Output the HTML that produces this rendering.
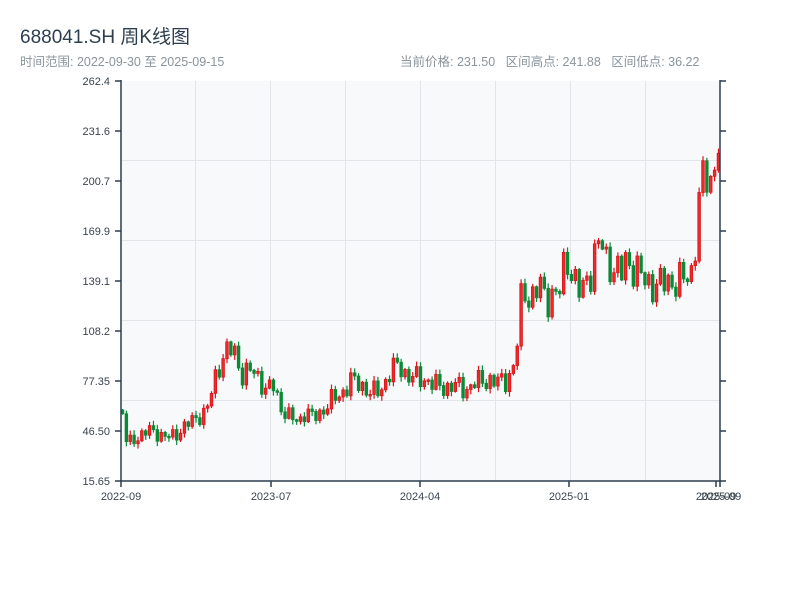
<!DOCTYPE html>
<html><head><meta charset="utf-8"><style>
body{margin:0;width:800px;height:600px;background:#fff;font-family:"Liberation Sans","Noto Sans CJK SC",sans-serif;overflow:hidden}
.t{position:absolute;left:20px;top:22px;font-size:19px;color:#2c3e50}
.s{position:absolute;top:51px;font-size:12.5px;color:#8a949c}
</style></head><body>
<div class="t">688041.SH 周K线图</div>
<div class="s" style="left:20px">时间范围: 2022-09-30 至 2025-09-15</div>
<div class="s" style="left:400px">当前价格: 231.50&nbsp;&nbsp;&nbsp;区间高点: 241.88&nbsp;&nbsp;&nbsp;区间低点: 36.22</div>
<svg id="c" width="800" height="600" style="position:absolute;left:0;top:0" font-family="Liberation Sans, sans-serif" font-size="11" fill="#3a4450">
<rect x="121" y="81" width="599" height="400" fill="#f7f9fb"/>
<g stroke="#e1e4e8" stroke-width="1">
<line x1="195.5" y1="81" x2="195.5" y2="481"/><line x1="270.5" y1="81" x2="270.5" y2="481"/><line x1="345.5" y1="81" x2="345.5" y2="481"/><line x1="420.5" y1="81" x2="420.5" y2="481"/><line x1="495.5" y1="81" x2="495.5" y2="481"/><line x1="570.5" y1="81" x2="570.5" y2="481"/><line x1="645.5" y1="81" x2="645.5" y2="481"/>
<line x1="121" y1="160.5" x2="720" y2="160.5"/><line x1="121" y1="240.5" x2="720" y2="240.5"/><line x1="121" y1="320.5" x2="720" y2="320.5"/><line x1="121" y1="400.5" x2="720" y2="400.5"/>
</g>
<g id="k"></g>
<g stroke="#2c3e50" stroke-width="1.5" fill="none">
<line x1="121" y1="80" x2="121" y2="482"/><line x1="720" y1="80" x2="720" y2="482"/><line x1="120" y1="481" x2="721" y2="481"/>
<path d="M115 81h6M115 131h6M115 181h6M115 231h6M115 281h6M115 331h6M115 381h6M115 431h6M115 481h6M720 81h6M720 131h6M720 181h6M720 231h6M720 281h6M720 331h6M720 381h6M720 431h6M720 481h6M121 481v6M271 481v6M420 481v6M569 481v6M716 481v6M720 481v6"/>
</g>
<g text-anchor="end">
<text x="110" y="85">262.4</text><text x="110" y="135">231.6</text><text x="110" y="185">200.7</text><text x="110" y="235">169.9</text><text x="110" y="285">139.1</text><text x="110" y="335">108.2</text><text x="110" y="385">77.35</text><text x="110" y="435">46.50</text><text x="110" y="485">15.65</text>
</g>
<g text-anchor="middle">
<text x="121" y="500">2022-09</text><text x="271" y="500">2023-07</text><text x="420" y="500">2024-04</text><text x="569" y="500">2025-01</text><text x="716" y="500">2025-09</text><text x="721" y="500">2025-09</text>
</g>
</svg>
<script>
(function(){
var kp=[[121,410],[125,440],[130,442],[140,435],[148,430],[155,433],[165,437],[175,435],[185,425],[195,418],[205,412],[210,395],[215,375],[220,360],[228,348],[235,355],[240,375],[250,370],[258,378],[265,390],[272,385],[280,408],[290,418],[298,422],[305,410],[312,418],[320,413],[330,400],[340,395],[350,380],[360,385],[370,393],[380,390],[390,370],[398,365],[405,375],[415,378],[425,380],[435,385],[445,388],[455,385],[465,390],[475,382],[485,380],[495,382],[505,380],[512,370],[516,345],[520,300],[525,290],[530,300],[540,285],[545,300],[550,295],[558,295],[565,255],[570,270],[575,285],[580,295],[585,280],[590,270],[595,250],[600,240],[605,260],[610,265],[615,270],[620,275],[625,260],[630,265],[640,275],[645,283],[655,285],[665,282],[675,282],[685,278],[690,275],[693,255],[697,210],[700,185],[705,175],[710,185],[715,150],[719,130]];
function f(x){for(var i=1;i<kp.length;i++){if(x<=kp[i][0]){var a=kp[i-1],b=kp[i];return a[1]+(b[1]-a[1])*(x-a[0])/(b[0]-a[0]);}}return 130;}
var NS='http://www.w3.org/2000/svg',g=document.getElementById('k'),prev=410;
function el(t,a){var e=document.createElementNS(NS,t);for(var k in a)e.setAttribute(k,String(a[k]));g.appendChild(e);}
for(var i=0;i<155;i++){var x=121.5+i*3.87;var base=f(x);var amp=5+(440-base)/18;
var c=base+Math.sin(i*2.3)*amp+Math.sin(i*5.1)*amp*0.5;
var o=prev;var up=c<o;var bt=Math.min(o,c),bb=Math.max(o,c);if(bb-bt<1.5)bb=bt+1.5;
var hi=bt-1-Math.abs(Math.sin(i*3.7))*4,lo=bb+1+Math.abs(Math.sin(i*1.9))*4;
var col=up?'#d9141a':'#0b8a36';
el('line',{x1:(x+1).toFixed(2),x2:(x+1).toFixed(2),y1:hi.toFixed(2),y2:lo.toFixed(2),stroke:col,'stroke-width':1.2});
el('rect',{x:(x-0.3).toFixed(2),y:bt.toFixed(2),width:2.6,height:(bb-bt).toFixed(2),fill:up?'#ef2a2a':col,stroke:col,'stroke-width':0.8});
prev=c;}
})();
</script>
</body></html>
